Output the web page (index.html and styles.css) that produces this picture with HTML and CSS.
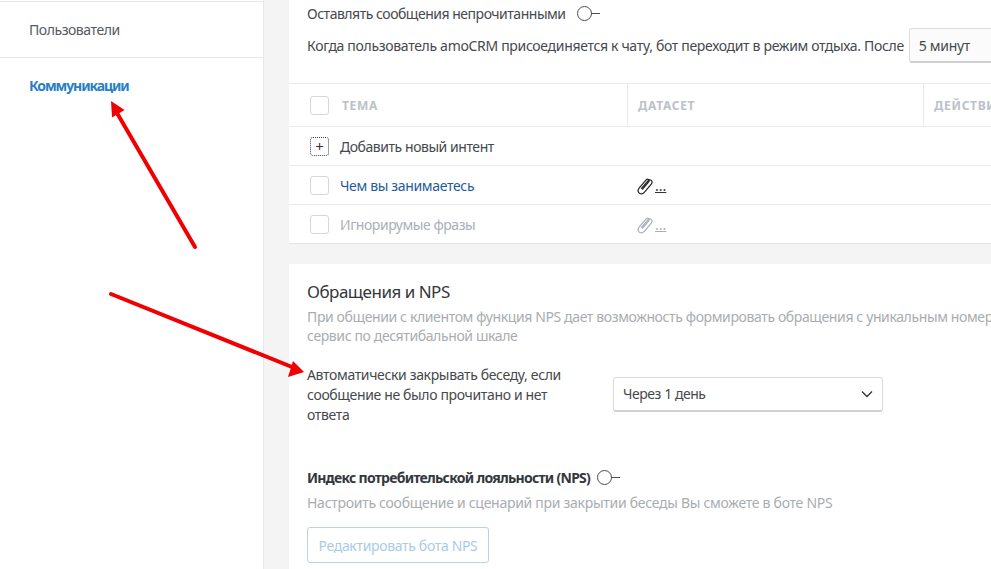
FILE: index.html
```html
<!DOCTYPE html>
<html lang="ru">
<head>
<meta charset="utf-8">
<title>Коммуникации</title>
<link rel="stylesheet" href="styles.css">
</head>
<body>
<div class="app">
  <aside class="sidebar">
    <a class="nav-item">Пользователи</a>
    <a class="nav-item nav-active">Коммуникации</a>
  </aside>
  <main class="main">
    <section class="card card-top">
      <div class="option-row"><span>Оставлять сообщения непрочитанными</span><span class="toggle"></span></div>
      <div class="rest-row">
        <span>Когда пользователь amoCRM присоединяется к чату, бот переходит в режим отдыха. После</span>
        <span class="select select-small">5 минут</span>
      </div>
      <div class="table">
        <div class="tr th">
          <div class="col-a"><span class="check"></span><span>ТЕМА</span></div>
          <div class="col-b"><span>ДАТАСЕТ</span></div>
          <div class="col-c"><span>ДЕЙСТВИЯ</span></div>
        </div>
        <div class="tr add-row">
          <div class="col-a"><span class="check check-add">+</span><span>Добавить новый интент</span></div>
        </div>
        <div class="tr">
          <div class="col-a"><span class="check"></span><span class="link">Чем вы занимаетесь</span></div>
          <div class="col-b dataset">
            <svg class="clip" viewBox="0 0 16 16"><path d="M5.500 10.500l5.200-6.200c.9-1.100 2.200-1.300 3-.6.800.7.800 2 0 3.100l-5.700 6.800c-1.300 1.500-3.200 1.800-4.400.8-1.200-1-1.200-2.800 0-4.300l5.600-6.700c.7-.8 1.600-1 2.200-.5.600.5.600 1.400 0 2.200l-5 6" fill="none" stroke="#222" stroke-width="1" stroke-linecap="round"/></svg>
            <span class="dots">...</span>
          </div>
        </div>
        <div class="tr muted-row">
          <div class="col-a"><span class="check"></span><span>Игнорирумые фразы</span></div>
          <div class="col-b dataset">
            <svg class="clip" viewBox="0 0 16 16"><path d="M5.500 10.500l5.200-6.200c.9-1.100 2.200-1.300 3-.6.800.7.800 2 0 3.100l-5.700 6.800c-1.300 1.500-3.200 1.800-4.400.8-1.200-1-1.200-2.800 0-4.300l5.600-6.700c.7-.8 1.600-1 2.200-.5.600.5.600 1.400 0 2.200l-5 6" fill="none" stroke="#a9afb8" stroke-width="1" stroke-linecap="round"/></svg>
            <span class="dots">...</span>
          </div>
        </div>
      </div>
    </section>
    <section class="card card-nps">
      <h2 class="title">Обращения и NPS</h2>
      <p class="hint hint-intro">При общении с клиентом функция NPS дает возможность формировать обращения с уникальным номером и оценивать<br>сервис по десятибальной шкале</p>
      <div class="close-row">
        <p class="close-text">Автоматически закрывать беседу, если сообщение не было прочитано и нет ответа</p>
        <span class="select select-big">Через 1 день
          <svg class="chevron" viewBox="0 0 12 8"><path d="M1 1.500l5 5 5-5" fill="none" stroke="#333" stroke-width="1.300"/></svg>
        </span>
      </div>
      <div class="option-row nps-row"><b>Индекс потребительской лояльности (NPS)</b><span class="toggle"></span></div>
      <p class="hint hint-bot">Настроить сообщение и сценарий при закрытии беседы Вы сможете в боте NPS</p>
      <span class="btn">Редактировать бота NPS</span>
    </section>
  </main>
</div>
<svg class="arrows" viewBox="0 0 991 569">
  <path d="M195 247L117 113" stroke="#f00000" stroke-width="4" stroke-linecap="round" fill="none"/>
  <path d="M111 101L124.500 110L112 117.500Z" fill="#f00000"/>
  <path d="M111 294L292 367" stroke="#f00000" stroke-width="4" stroke-linecap="round" fill="none"/>
  <path d="M304 372L288 377L293 361Z" fill="#f00000"/>
</svg>
</body>
</html>
```
FILE: styles.css
```css
* { box-sizing: border-box; }
html, body { margin: 0; height: 569px; overflow: hidden; }
body {
  position: relative;
  font-family: "Noto Sans", "Liberation Sans", sans-serif;
  font-size: 14px;
  color: #45494d;
  background: #fff;
}
.app { display: flex; height: 569px; }
.sidebar {
  width: 264px;
  flex: none;
  padding-top: 1px;
  background: #fff;
  border-right: 1px solid #e8e8e8;
}
.nav-item {
  display: flex;
  align-items: center;
  height: 56px;
  padding: 0 0 0 29px;
  border-top: 1px solid #e8e8e8;
  letter-spacing: -0.45px;
  color: #555a5e;
}
.nav-active { color: #2a7fc4; font-weight: 700; letter-spacing: -1.1px; }
.main {
  flex: 1;
  min-width: 0;
  padding-left: 25px;
  background: #f4f4f4;
  display: flex;
  flex-direction: column;
  gap: 20px;
}
.card { background: #fff; overflow: hidden; white-space: nowrap; letter-spacing: -0.45px; }
.card-top { height: 244px; flex: none; border-bottom: 1px solid #e6e6e6; }
.card-nps { flex: 1; padding: 16px 0 0 18px; }
.option-row { display: flex; align-items: center; gap: 11px; }
.card-top .option-row { height: 27px; padding-left: 18px; letter-spacing: -0.48px; }
.toggle {
  position: relative;
  width: 15px;
  height: 15px;
  border: 1px solid #4a4e52;
  border-radius: 50%;
  flex: none;
  background: #fff;
}
.toggle::after {
  content: "";
  position: absolute;
  left: 13px;
  top: 6px;
  width: 9px;
  height: 1px;
  background: #4a4e52;
}
.rest-row { display: flex; align-items: center; gap: 5px; height: 35px; padding-left: 18px; margin-top: 1px; letter-spacing: -0.32px; }
.select {
  display: flex;
  align-items: center;
  flex: none;
  background: #fff;
  border: 1px solid #dcdcdc;
  border-bottom: 2px solid #d0d0d0;
  border-radius: 3px;
  padding-left: 9px;
}
.select-small { width: 120px; height: 35px; background: #fbfbfb; }
.table { margin-top: 20px; }
.tr { display: flex; align-items: center; height: 39px; border-top: 1px solid #ebebeb; }
.th {
  height: 43px;
  font-size: 12px;
  font-weight: 700;
  letter-spacing: 0.7px;
  color: #bcc1c9;
}
.col-a { width: 338px; flex: none; height: 100%; display: flex; align-items: center; gap: 11px; padding-left: 21px; }
.th .col-a { gap: 13px; }
.col-b { width: 296px; flex: none; height: 100%; display: flex; align-items: center; padding-left: 10px; }
.col-c { flex: 1; height: 100%; display: flex; align-items: center; padding-left: 10px; }
.th .col-b, .th .col-c { border-left: 1px solid #ebebeb; }
.check {
  width: 19px;
  height: 19px;
  flex: none;
  border: 1px solid #d7d7d7;
  border-radius: 3px;
  background: #fff;
}
.check-add {
  display: flex;
  align-items: center;
  justify-content: center;
  border: 1px dotted #444;
  font-size: 15px;
  color: #333;
  letter-spacing: 0;
}
.link { color: #1f5c99; letter-spacing: -0.34px; }
.muted-row { color: #a9afb8; }
.dataset { gap: 1px; }
.clip { width: 19px; height: 19px; margin-left: -2px; }
.dots { text-decoration: underline; line-height: 1; letter-spacing: 0; color: #333; margin-top: 2px; }
.muted-row .dots { color: #a9afb8; }
.title { margin: 0; font-size: 17px; font-weight: 400; line-height: 24px; color: #33383c; letter-spacing: -0.5px; }
.hint { margin: 0; color: #a9adb0; line-height: 19px; }
.hint-intro { margin-top: 3px; letter-spacing: -0.38px; }
.close-row { display: flex; align-items: center; margin-top: 20px; }
.close-text { margin: 0 46px 0 0; width: 260px; flex: none; white-space: normal; line-height: 20px; letter-spacing: -0.35px; }
.select-big { width: 270px; height: 35px; position: relative; margin-top: -2px; }
.chevron { position: absolute; right: 9px; top: 12px; width: 12px; height: 8px; }
.nps-row { margin-top: 42px; gap: 7px; height: 20px; }
.nps-row b { font-weight: 700; color: #33383c; letter-spacing: -0.73px; }
.hint-bot { margin-top: 6px; letter-spacing: -0.28px; }
.btn {
  display: inline-flex;
  align-items: center;
  justify-content: center;
  width: 182px;
  height: 36px;
  margin-top: 15px;
  border: 1px solid #b8d3ea;
  border-radius: 3px;
  color: #a9cbe6;
  letter-spacing: -0.33px;
}
.arrows { position: absolute; left: 0; top: 0; width: 991px; height: 569px; pointer-events: none; }
```
